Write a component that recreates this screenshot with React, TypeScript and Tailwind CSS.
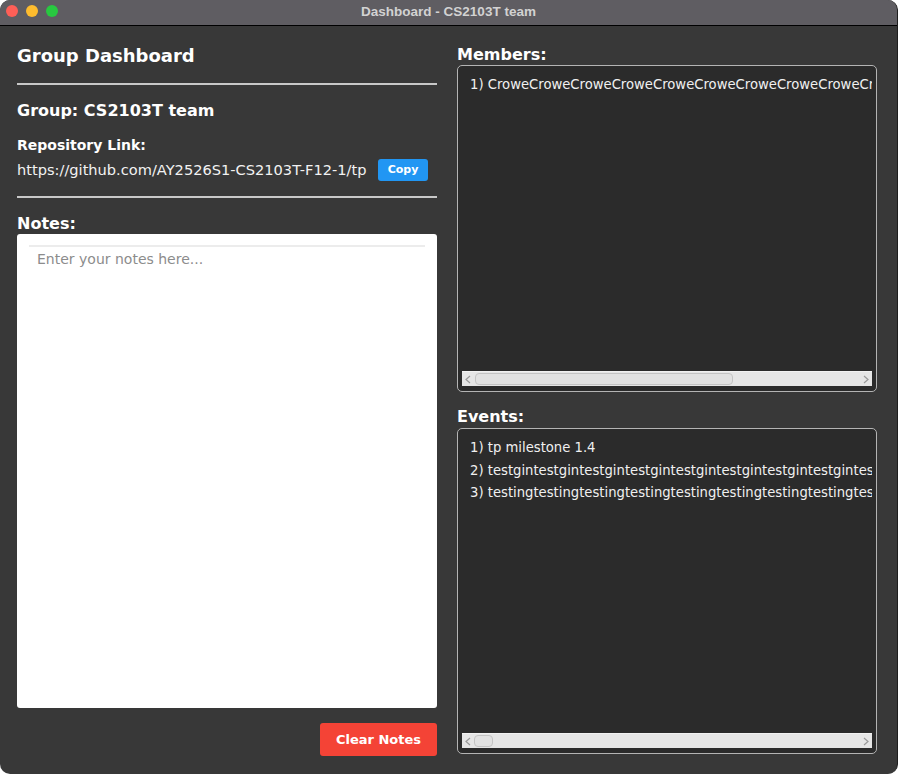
import React from "react";

const FONT = { fontFamily: '"DejaVu Sans", Verdana, sans-serif' };

const members = ["CroweCroweCroweCroweCroweCroweCroweCroweCroweCroweCroweCrowe"];
const events = [
    "tp milestone 1.4",
    "testgintestgintestgintestgintestgintestgintestgintestgintestgintestgin",
    "testingtestingtestingtestingtestingtestingtestingtestingtestingtesting",
];

function ScrollBar({ thumbLeft, thumbWidth }: { thumbLeft: number; thumbWidth: number }) {
    return (
        <div className="relative h-[15px] shrink-0 bg-[#e6e6e6] border-t border-[#f2f2f2]">
            <svg className="absolute left-[2px] top-[3px]" width="8" height="9" viewBox="0 0 8 9">
                <path d="M6 1 L2 4.5 L6 8" fill="none" stroke="#9a9a9a" strokeWidth="1.2" />
            </svg>
            <div
                className="absolute top-[1px] h-[12px] rounded-[4px] border border-[#c4c4c4] bg-[#e2e2e2]"
                style={{ left: thumbLeft, width: thumbWidth }}
            />
            <svg className="absolute right-[2px] top-[3px]" width="8" height="9" viewBox="0 0 8 9">
                <path d="M2 1 L6 4.5 L2 8" fill="none" stroke="#9a9a9a" strokeWidth="1.2" />
            </svg>
        </div>
    );
}

function ListBox({ items, height, thumbLeft, thumbWidth }: { items: string[]; height: number; thumbLeft: number; thumbWidth: number }) {
    return (
        <div
            className="flex flex-col rounded-[5px] border border-[#b4b4b4] bg-[#2b2b2b] px-[4px] pb-[5px]"
            style={{ height }}
        >
            <div className="flex-1 overflow-hidden pt-[8px] pl-[8px]">
                {items.map((it, i) => (
                    <div key={i} className="h-[22.5px] leading-[22px] whitespace-nowrap text-[13.2px] text-[#f0f0f0]">
                        {i + 1}) {it}
                    </div>
                ))}
            </div>
            <ScrollBar thumbLeft={thumbLeft} thumbWidth={thumbWidth} />
        </div>
    );
}

export default function App() {
    return (
        <div className="w-[898px] h-[774px] bg-white">
            <div className="w-[898px] h-[774px] rounded-[10px] overflow-hidden bg-[#383838] border-r border-[#1e1e1e] flex flex-col" style={FONT}>
                <div className="relative h-[26px] shrink-0 bg-[#5f5d62] border-b border-black flex items-center justify-center">
                    <div className="absolute left-[6px] top-[5px] flex gap-[8px]">
                        <span className="w-[12px] h-[12px] rounded-full bg-[#fe5f57]" />
                        <span className="w-[12px] h-[12px] rounded-full bg-[#febc2e]" />
                        <span className="w-[12px] h-[12px] rounded-full bg-[#28c840]" />
                    </div>
                    <span className="text-[13.5px] font-bold text-[#d2d2d2]" style={{ fontFamily: '"Liberation Sans", Arial, sans-serif' }}>
                        Dashboard - CS2103T team
                    </span>
                </div>

                <div className="flex gap-[20px] px-[17px]">
                    <div className="w-[420px] flex flex-col pt-[19px]">
                        <div className="text-[18px] leading-[22px] font-bold text-white">Group Dashboard</div>
                        <div className="mt-[16px] h-[2px] bg-[#c8c8c8]" />
                        <div className="mt-[16px] text-[16px] leading-[20px] font-bold text-white">Group: CS2103T team</div>
                        <div className="mt-[15px] text-[14px] leading-[18px] font-bold text-white">Repository Link:</div>
                        <div className="mt-[5px] flex items-center h-[22px]">
                            <span className="text-[14.6px] text-[#f2f2f2]">https://github.com/AY2526S1-CS2103T-F12-1/tp</span>
                            <button className="ml-auto mr-[9px] w-[50px] h-[22px] rounded-[3px] bg-[#2196f3] text-[11px] font-bold text-white">
                                Copy
                            </button>
                        </div>
                        <div className="mt-[15px] h-[2px] bg-[#c8c8c8]" />
                        <div className="mt-[16px] text-[16px] leading-[20px] font-bold text-white">Notes:</div>
                        <div className="h-[474px] rounded-[3px] bg-white px-[12px] pt-[11px]">
                            <div className="h-[2px] bg-[#ececec]" />
                            <div className="pl-[8px] pt-[2px] text-[14px] leading-[20px] text-[#8c8c8c]">Enter your notes here...</div>
                        </div>
                        <div className="mt-[15px] flex justify-end">
                            <button className="w-[117px] h-[33px] rounded-[3px] bg-[#f44336] text-[13px] font-bold text-white">
                                Clear Notes
                            </button>
                        </div>
                    </div>

                    <div className="w-[420px] flex flex-col pt-[19px]">
                        <div className="text-[16px] leading-[20px] font-bold text-white">Members:</div>
                        <ListBox items={members} height={327} thumbLeft={13} thumbWidth={258} />
                        <div className="mt-[15px] text-[16px] leading-[20px] font-bold text-white">Events:</div>
                        <div className="mt-[1px]">
                            <ListBox items={events} height={326} thumbLeft={12} thumbWidth={19} />
                        </div>
                    </div>
                </div>
            </div>
        </div>
    );
}
